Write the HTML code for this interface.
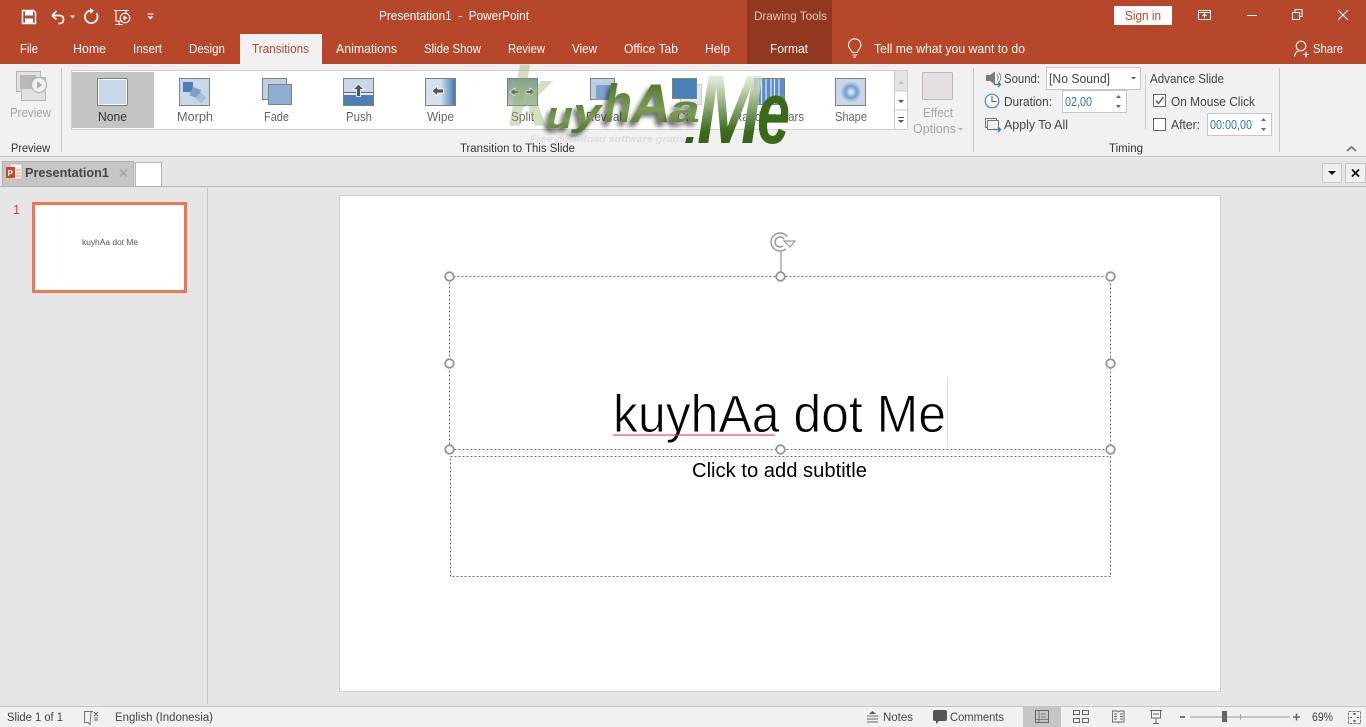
<!DOCTYPE html>
<html><head><meta charset="utf-8"><title>PowerPoint</title>
<style>
html,body{margin:0;padding:0;width:1366px;height:727px;overflow:hidden;background:#e6e6e6}
svg{display:block}
text{font-family:"Liberation Sans",sans-serif;font-size:12.5px;fill:#444}
.w{fill:#fff}.g{fill:#a6a6a6}.d{fill:#333}.b{fill:#2f73b7}
.ic{fill:none;stroke:#fff;stroke-width:1.5}
.wm{font-family:"Liberation Sans",sans-serif;font-style:italic;font-weight:bold}
</style></head><body>
<svg width="1366" height="727" viewBox="0 0 1366 727" xmlns="http://www.w3.org/2000/svg">
<defs>
<linearGradient id="wipe" x1="0" x2="1"><stop offset=".5" stop-color="#d5e1ee"/><stop offset="1" stop-color="#3f74ad"/></linearGradient>
<linearGradient id="spl" x1="0" x2="0" y1="0" y2="1"><stop offset="0" stop-color="#7f9f95"/><stop offset="1" stop-color="#b9cbb5"/></linearGradient>
<radialGradient id="sh"><stop offset="0" stop-color="#f3f7fb"/><stop offset=".55" stop-color="#6f9fd0"/><stop offset="1" stop-color="#c9d9e9"/></radialGradient>
<linearGradient id="gr" x1="0" x2="0" y1="0" y2="1"><stop offset="0" stop-color="#3f6f1c"/><stop offset=".6" stop-color="#7b9c52"/><stop offset="1" stop-color="#496f25"/></linearGradient>
<linearGradient id="grm" x1="0" x2="0" y1="0" y2="1"><stop offset="0" stop-color="#fff" stop-opacity=".3"/><stop offset=".35" stop-color="#b5c9a2"/><stop offset=".7" stop-color="#3c6a1c"/><stop offset="1" stop-color="#2c5a12"/></linearGradient>
<filter id="shd" x="-30%" y="-20%" width="160%" height="150%"><feDropShadow dx="-3" dy="4" stdDeviation="2.5" flood-color="#000" flood-opacity=".6"/></filter>
<pattern id="sq" width="4" height="2" patternUnits="userSpaceOnUse" x="613" y="434"><path d="M0 .5l1 1 1-1 1 1 1-1" fill="none" stroke="#ea3a3a" stroke-width=".8"/></pattern>
</defs>

<!-- title bar -->
<rect width="1366" height="64" fill="#b7472a"/>
<rect x="747" width="85" height="64" fill="#923720"/>
<rect x="240" y="34" width="82" height="30" fill="#f1f1f1"/>

<!-- QAT -->
<path d="M22.500 10.500h11l2 2v11h-13z" class="ic"/>
<rect x="25" y="11" width="8" height="4.500" fill="#fff"/><rect x="25" y="18.500" width="8" height="5" fill="#fff"/>
<path d="M52 15.500l4.500-4.500M52 15.500l4.500 4M52.500 15.500h7q4 0 4 4t-4 4h-1" fill="none" stroke="#fff" stroke-width="1.700"/>
<path d="M70 15.500h5l-2.500 3z" fill="#fff"/>
<path d="M91 10.500a6.300 6.300 0 1 0 5.500 2.800" fill="none" stroke="#fff" stroke-width="1.800"/><path d="M90 8l4 2.500-3.500 3.500z" fill="#fff"/>
<path d="M114 10.500h15M116 11v10h6M126 11v3M119 21v3M115.500 24.500h7" fill="none" stroke="#fff" stroke-width="1.100"/>
<circle cx="125" cy="18" r="4.800" fill="none" stroke="#fff" stroke-width="1.100"/><path d="M123.500 15.500l4 2.500-4 2.500z" fill="#fff"/>
<path d="M147.500 14h6" stroke="#fff"/><path d="M147.500 16.500h6l-3 3z" fill="#fff"/>

<text x="379" y="20" class="w" textLength="150" lengthAdjust="spacingAndGlyphs" xml:space="preserve">Presentation1  -  PowerPoint</text>
<text x="754" y="20" style="fill:#eec3b6;font-size:11.5px" textLength="73" lengthAdjust="spacingAndGlyphs">Drawing Tools</text>
<rect x="1114" y="6" width="58" height="19" fill="#fff"/>
<text x="1125" y="20" style="fill:#b7472a;font-size:13px" textLength="36" lengthAdjust="spacingAndGlyphs">Sign in</text>

<!-- window controls -->
<rect x="1198.500" y="10.500" width="12" height="9" fill="none" stroke="#fff"/><path d="M1198 12.500h13M1204.500 18v-4M1202.500 16l2-2 2 2" fill="none" stroke="#fff"/>
<path d="M1247 15.500h10" stroke="#fff" stroke-width="1"/>
<rect x="1292.500" y="12.500" width="7" height="7" fill="none" stroke="#fff"/><path d="M1295 12v-2.500h7v7h-2.500" fill="none" stroke="#fff"/>
<path d="M1338 10l10 10M1348 10l-10 10" stroke="#fff" stroke-width="1"/>

<!-- tabs -->
<text x="20" y="53" class="w" textLength="18" lengthAdjust="spacingAndGlyphs">File</text>
<text x="73" y="53" class="w" textLength="33" lengthAdjust="spacingAndGlyphs">Home</text>
<text x="133" y="53" class="w" textLength="29" lengthAdjust="spacingAndGlyphs">Insert</text>
<text x="189" y="53" class="w" textLength="36" lengthAdjust="spacingAndGlyphs">Design</text>
<text x="252" y="53" style="fill:#b7472a" textLength="57" lengthAdjust="spacingAndGlyphs">Transitions</text>
<text x="336" y="53" class="w" textLength="61" lengthAdjust="spacingAndGlyphs">Animations</text>
<text x="424" y="53" class="w" textLength="57" lengthAdjust="spacingAndGlyphs">Slide Show</text>
<text x="508" y="53" class="w" textLength="37" lengthAdjust="spacingAndGlyphs">Review</text>
<text x="572" y="53" class="w" textLength="25" lengthAdjust="spacingAndGlyphs">View</text>
<text x="624" y="53" class="w" textLength="54" lengthAdjust="spacingAndGlyphs">Office Tab</text>
<text x="705" y="53" class="w" textLength="25" lengthAdjust="spacingAndGlyphs">Help</text>
<text x="770" y="53" class="w" textLength="38" lengthAdjust="spacingAndGlyphs">Format</text>
<path d="M852 52.500c0-2.500-3.500-3.500-3.500-7.500a6.200 6.200 0 0 1 12.400 0c0 4-3.500 5-3.500 7.500zM852.500 55h4.500M853.500 57h2.500" fill="none" stroke="#fff" stroke-width="1.100"/>
<text x="874" y="53" class="w" textLength="151" lengthAdjust="spacingAndGlyphs">Tell me what you want to do</text>
<circle cx="1301" cy="46" r="4.800" fill="none" stroke="#fff" stroke-width="1.100"/>
<path d="M1294.500 56.500c.5-4 3-5.500 5-6M1303 54.500h6M1306 51.500v6" fill="none" stroke="#fff" stroke-width="1.100"/>
<text x="1313" y="53" class="w" textLength="30" lengthAdjust="spacingAndGlyphs">Share</text>

<!-- ribbon -->
<rect y="64" width="1366" height="92" fill="#f1f1f1"/>
<rect y="156" width="1366" height="1" fill="#c6c6c6"/>
<rect x="61" y="68" width="1" height="84" fill="#c6c6c6"/>
<rect x="973" y="68" width="1" height="84" fill="#c6c6c6"/>
<rect x="1279" y="68" width="1" height="84" fill="#c6c6c6"/>
<rect x="1145" y="74" width="1" height="55" fill="#d0d0d0"/>

<!-- preview group -->
<rect x="16.500" y="71.500" width="24" height="20" fill="#e4dfe3" stroke="#b4b4b4"/>
<rect x="21.500" y="77.500" width="24" height="23" fill="#e4dfe3" stroke="#b4b4b4"/>
<rect x="20" y="75" width="16" height="14" fill="#b8b8b8"/>
<circle cx="39" cy="85" r="7.500" fill="#f1f1f1" stroke="#b4b4b4" stroke-width="1.200"/><path d="M37 81l5 4-5 4z" fill="#b0b0b0"/>
<text x="10" y="117" class="g" textLength="41" lengthAdjust="spacingAndGlyphs">Preview</text>
<text x="11" y="152" class="d" textLength="39" lengthAdjust="spacingAndGlyphs" style="font-size:11.500px">Preview</text>

<!-- gallery -->
<rect x="71.500" y="70.500" width="836" height="59" fill="#fff" stroke="#d0d0d0"/>
<rect x="72" y="72" width="82" height="56" fill="#c4c4c4"/>
<rect x="894" y="71" width="13" height="20" fill="#e4e4e4"/>
<path d="M894.500 71v58M895 91h13M895 110h13" stroke="#c8c8c8" fill="none"/>
<path d="M898 84l3-3 3 3z" fill="#c0c0c0"/>
<path d="M898 100h6l-3 3z" fill="#555"/>
<path d="M898 117.500h6" stroke="#555"/><path d="M898 120h6l-3 3z" fill="#555"/>

<!-- None -->
<rect x="97.500" y="78.500" width="30" height="27" rx="1" fill="#c9d8e8" stroke="#7f7f7f"/><rect x="98.500" y="79.500" width="28" height="25" fill="none" stroke="#fff"/>
<!-- Morph -->
<rect x="179.500" y="78.500" width="30" height="27" fill="#c9d8e8" stroke="#7f7f7f"/>
<rect x="183" y="82" width="10" height="10" fill="#4a7fb8"/>
<rect x="191" y="88" width="9" height="9" fill="#79a1cc" transform="rotate(20 195 92)"/>
<rect x="197" y="94" width="8" height="8" fill="#a7c1dd" transform="rotate(40 201 98)"/>
<!-- Fade -->
<rect x="262.500" y="78.500" width="24" height="21" fill="#bfd0e3" stroke="#7f7f7f"/>
<rect x="268.500" y="84.500" width="23" height="20" fill="#8eaed1" stroke="#7f7f7f"/>
<!-- Push -->
<rect x="343.500" y="78.500" width="30" height="27" fill="#c9d8e8" stroke="#7f7f7f"/>
<rect x="344" y="95" width="29" height="10" fill="#4a7fb8"/><path d="M344 92.500h29" stroke="#666"/><path d="M344 94h29" stroke="#fff"/>
<path d="M358.500 84l5.500 5.500h-3.500v7h-4v-7h-3.500z" fill="#555" stroke="#fff" stroke-width=".8"/>
<!-- Wipe -->
<rect x="425.500" y="78.500" width="30" height="27" fill="url(#wipe)" stroke="#7f7f7f"/>
<path d="M432 91l5.500-5v3h6v4h-6v3z" fill="#555" stroke="#fff" stroke-width=".8"/>
<!-- Split -->
<rect x="507.500" y="78.500" width="30" height="27" fill="url(#spl)" stroke="#7f7f7f"/>
<path d="M510 92l5-4v2.500h4v3h-4v2.500zM535 92l-5-4v2.500h-4v3h4v2.500z" fill="#6a6a50" stroke="#fff" stroke-width=".6"/>
<!-- Reveal -->
<rect x="590.500" y="78.500" width="24" height="21" fill="#bfd0e3" stroke="#7f7f7f"/>
<rect x="596" y="85" width="19" height="15" fill="#7ea4cc"/>
<!-- Cut -->
<rect x="680.500" y="84.500" width="21" height="20" fill="#dfe8f2" stroke="#c4cdd6"/>
<rect x="672.500" y="78.500" width="24" height="20" fill="#4a7fb8" stroke="#7f7f7f"/>
<!-- Random bars -->
<rect x="754.500" y="78.500" width="30" height="26" fill="#5b8ec4" stroke="#7f7f7f"/>
<path d="M758 79v25M761.500 79v25M766 79v25M771 79v25M774.500 79v25M779 79v25" stroke="#dce7f2" stroke-width="1.200"/>
<!-- Shape -->
<rect x="835.500" y="78.500" width="30" height="27" fill="#c9d8e8" stroke="#7f7f7f"/>
<circle cx="851" cy="92" r="10.500" fill="url(#sh)"/>

<g>
<text x="98" y="121" class="d" textLength="29" lengthAdjust="spacingAndGlyphs">None</text>
<text x="177" y="121" textLength="36" lengthAdjust="spacingAndGlyphs" style="fill:#666">Morph</text>
<text x="264" y="121" textLength="25" lengthAdjust="spacingAndGlyphs" style="fill:#666">Fade</text>
<text x="346" y="121" textLength="26" lengthAdjust="spacingAndGlyphs" style="fill:#666">Push</text>
<text x="427" y="121" textLength="27" lengthAdjust="spacingAndGlyphs" style="fill:#666">Wipe</text>
<text x="511" y="121" textLength="23" lengthAdjust="spacingAndGlyphs" style="fill:#666">Split</text>
<text x="586" y="121" textLength="36" lengthAdjust="spacingAndGlyphs" style="fill:#666">Reveal</text>
<text x="677" y="121" textLength="19" lengthAdjust="spacingAndGlyphs" style="fill:#666">Cut</text>
<text x="734" y="121" textLength="70" lengthAdjust="spacingAndGlyphs" style="fill:#666">Random Bars</text>
<text x="835" y="121" textLength="32" lengthAdjust="spacingAndGlyphs" style="fill:#666">Shape</text>
</g>
<text x="460" y="152" class="d" textLength="115" lengthAdjust="spacingAndGlyphs" style="font-size:11.500px">Transition to This Slide</text>

<!-- effect options -->
<rect x="922.500" y="72.500" width="30" height="27" rx="1" fill="#e4dfe3" stroke="#b9b9b9"/>
<text x="923" y="117" class="g" textLength="30" lengthAdjust="spacingAndGlyphs">Effect</text>
<text x="913" y="133" class="g" textLength="43" lengthAdjust="spacingAndGlyphs">Options</text>
<path d="M958 128h5l-2.500 2.500z" fill="#b0b0b0"/>

<!-- timing -->
<path d="M986 75h4l5-3.500v13l-5-3.500h-4z" fill="#7b7b7b"/>
<path d="M997 74.500q2 3 0 6M999 72.500q3.500 5 0 10" fill="none" stroke="#888"/>
<path d="M994 84.500h6M998 82l2.500 2.500L998 87" fill="none" stroke="#3f74ad" stroke-width="1.300"/>
<text x="1004" y="83" textLength="36" lengthAdjust="spacingAndGlyphs">Sound:</text>
<rect x="1046.500" y="67.500" width="94" height="22" fill="#fff" stroke="#c6c6c6"/>
<text x="1049" y="83" textLength="61" lengthAdjust="spacingAndGlyphs">[No Sound]</text>
<path d="M1131 77h5l-2.500 2.500z" fill="#555"/>

<circle cx="992" cy="101" r="6.800" fill="#fff" fill-opacity=".4" stroke="#4a86c4" stroke-width="1.200"/><path d="M992 96v5.500h4.500" fill="none" stroke="#555"/>
<text x="1004" y="106" textLength="48" lengthAdjust="spacingAndGlyphs">Duration:</text>
<rect x="1062.500" y="90.500" width="64" height="22" fill="#fff" stroke="#c6c6c6"/>
<text x="1065" y="106" class="b" textLength="27" lengthAdjust="spacingAndGlyphs">02,00</text>
<path d="M1116 98l2.500-3 2.500 3zM1116 105l2.500 3 2.500-3z" fill="#666"/>

<rect x="985.500" y="118.500" width="11" height="9" fill="none" stroke="#777"/>
<rect x="987.500" y="120.500" width="11" height="9" fill="#f1f1f1" stroke="#777"/>
<path d="M994 129.500h6M998 127l2.500 2.500L998 132" fill="none" stroke="#3f74ad" stroke-width="1.300"/>
<text x="1004" y="129" textLength="64" lengthAdjust="spacingAndGlyphs">Apply To All</text>

<text x="1150" y="83" textLength="74" lengthAdjust="spacingAndGlyphs">Advance Slide</text>
<rect x="1153.500" y="94.500" width="12" height="12" fill="#fff" stroke="#666"/>
<path d="M1156 100.500l2.500 3 5-6.500" fill="none" stroke="#666" stroke-width="1.500"/>
<text x="1171" y="106" textLength="84" lengthAdjust="spacingAndGlyphs">On Mouse Click</text>
<rect x="1153.500" y="118.500" width="12" height="12" fill="#fff" stroke="#666"/>
<text x="1171" y="129" textLength="29" lengthAdjust="spacingAndGlyphs">After:</text>
<rect x="1207.500" y="113.500" width="64" height="22" fill="#fff" stroke="#c6c6c6"/>
<text x="1210" y="129" class="b" textLength="42" lengthAdjust="spacingAndGlyphs">00:00,00</text>
<path d="M1261 121l2.500-3 2.500 3zM1261 128l2.500 3 2.500-3z" fill="#666"/>
<text x="1109" y="152" class="d" textLength="34" lengthAdjust="spacingAndGlyphs" style="font-size:11.500px">Timing</text>
<path d="M1347 151l4.500-4 4.500 4" fill="none" stroke="#777" stroke-width="1.800"/>

<!-- watermark -->
<text x="508" y="126" textLength="42" lengthAdjust="spacingAndGlyphs" class="wm" style="font-size:84px;fill:#8fae6a;fill-opacity:.4">k</text>
<text x="546" y="128" filter="url(#shd)" textLength="27" lengthAdjust="spacingAndGlyphs" class="wm" style="font-size:38px;fill:url(#gr)">u</text>
<text x="573" y="125" filter="url(#shd)" textLength="28" lengthAdjust="spacingAndGlyphs" class="wm" style="font-size:38px;fill:url(#gr)">y</text>
<text x="604" y="122" filter="url(#shd)" textLength="28" lengthAdjust="spacingAndGlyphs" class="wm" style="font-size:54px;fill:url(#gr)">h</text>
<text x="631" y="122" filter="url(#shd)" textLength="40" lengthAdjust="spacingAndGlyphs" class="wm" style="font-size:55px;fill:url(#gr)">A</text>
<text x="669" y="122" filter="url(#shd)" textLength="31" lengthAdjust="spacingAndGlyphs" class="wm" style="font-size:38px;fill:url(#gr)">a</text>
<text x="684" y="143" textLength="14" lengthAdjust="spacingAndGlyphs" class="wm" style="font-size:40px;fill:#2f5a12">.</text>
<text x="697" y="143" textLength="64" lengthAdjust="spacingAndGlyphs" class="wm" style="font-size:97px;fill:url(#grm)">M</text>
<text x="757" y="143" textLength="33" lengthAdjust="spacingAndGlyphs" class="wm" style="font-size:88px;fill:#3a6a18">e</text>
<text x="530" y="142" textLength="155" lengthAdjust="spacingAndGlyphs" class="wm" style="font-size:9px;fill:#dcdcdc">Free download software gratis</text>

<!-- doc tab bar -->
<rect x="2.500" y="161.500" width="131" height="25" fill="#c6c6c6" stroke="#b0b0b0"/>
<rect x="135.500" y="162.500" width="26" height="24" fill="#fff" stroke="#b4b4b4"/>
<rect x="10" y="164" width="12" height="15" fill="#f7f1ee" stroke="#b8a9a2" stroke-width=".7"/>
<rect x="6" y="167" width="9" height="11" fill="#d24726"/>
<text x="7.500" y="176" class="w" style="font-size:8px;font-weight:bold">P</text>
<path d="M16 170h5M16 173h5M16 176h5" stroke="#e09a80"/>
<text x="25" y="177" textLength="84" lengthAdjust="spacingAndGlyphs" style="font-weight:bold;fill:#444">Presentation1</text>
<path d="M120 169.500l7 7M127 169.500l-7 7" stroke="#a8a8a8" stroke-width="1.800"/>
<rect x="1322.500" y="163.500" width="19" height="19" fill="#efefef" stroke="#c6c6c6"/>
<path d="M1328 171h8l-4 4z" fill="#111"/>
<rect x="1345.500" y="163.500" width="20" height="19" fill="#efefef" stroke="#c6c6c6"/>
<path d="M1352 169.500l7 7M1359 169.500l-7 7" stroke="#111" stroke-width="1.800"/>
<rect y="186" width="1366" height="1" fill="#b4b4b4"/>

<!-- panes -->
<rect x="207" y="188" width="1" height="516" fill="#c6c6c6"/>
<text x="13" y="214" textLength="7" lengthAdjust="spacingAndGlyphs" style="fill:#d24726;font-size:13px">1</text>
<rect x="33.500" y="203.500" width="152" height="88" fill="#fff" stroke="#f47351" stroke-width="3"/>
<text x="82" y="245" textLength="56" lengthAdjust="spacingAndGlyphs" style="font-size:8px;fill:#555">kuyhAa dot Me</text>

<!-- slide -->
<rect x="339.500" y="195.500" width="881" height="496" fill="#fff" stroke="#d0d0d0"/>
<rect x="449.500" y="276.500" width="661" height="173" fill="none" stroke="#707070" stroke-dasharray="2 2"/>
<rect x="450.500" y="456.500" width="660" height="120" fill="none" stroke="#707070" stroke-dasharray="2 2"/>
<path d="M781 252v20" stroke="#959595" stroke-width="1.200"/>
<path d="M787.400 236.800A9 9 0 1 0 785.800 248.900M784.100 239.100A5 5 0 1 0 783.200 245.800" fill="none" stroke="#999" stroke-width="1.500"/>
<path d="M784 241h11l-5 6z" fill="#fff" stroke="#999" stroke-width="1.200"/>
<g fill="#fff" stroke="#959595" stroke-width="1.800">
<circle cx="449.500" cy="276.500" r="4.300"/><circle cx="780.500" cy="276.500" r="4.300"/><circle cx="1110.500" cy="276.500" r="4.300"/>
<circle cx="449.500" cy="363.500" r="4.300"/><circle cx="1110.500" cy="363.500" r="4.300"/>
<circle cx="449.500" cy="449.500" r="4.300"/><circle cx="780.500" cy="449.500" r="4.300"/><circle cx="1110.500" cy="449.500" r="4.300"/>
</g>
<text x="613" y="432" textLength="333" lengthAdjust="spacingAndGlyphs" stroke="#fff" stroke-width=".9" style="font-size:53px;fill:#000">kuyhAa dot Me</text>
<rect x="613" y="434" width="162" height="2" fill="url(#sq)"/>
<rect x="947" y="378" width="1" height="69" fill="#ddd"/>
<text x="692" y="477" textLength="175" lengthAdjust="spacingAndGlyphs" style="font-size:20px;fill:#000">Click to add subtitle</text>

<!-- status bar -->
<rect y="706" width="1366" height="1" fill="#c6c6c6"/>
<rect y="707" width="1366" height="20" fill="#f1f1f1"/>
<text x="7" y="721" textLength="56" lengthAdjust="spacingAndGlyphs" style="font-size:11.500px">Slide 1 of 1</text>
<path d="M91 711.500h-6.500v11h3.500l2 2zM91 711.500h2" fill="none" stroke="#777"/>
<path d="M94 712l4 4M98 712l-4 4M94 718h4M94 720h4" stroke="#666"/>
<text x="115" y="721" textLength="98" lengthAdjust="spacingAndGlyphs" style="font-size:11.500px">English (Indonesia)</text>

<path d="M869 714l3.500-3 3.500 3z" fill="#555"/><path d="M867 716h11M867 719h11M867 722h11" stroke="#666"/>
<text x="883" y="721" textLength="30" lengthAdjust="spacingAndGlyphs" style="font-size:11.500px">Notes</text>
<path d="M935 710h10a2 2 0 0 1 2 2v7a2 2 0 0 1-2 2h-6l-3 3v-3h-1a2 2 0 0 1-2-2v-7a2 2 0 0 1 2-2z" fill="#555"/>
<text x="950" y="721" textLength="54" lengthAdjust="spacingAndGlyphs" style="font-size:11.500px">Comments</text>
<rect x="1023" y="707" width="38" height="20" fill="#c6c6c6"/>
<rect x="1035.500" y="710.500" width="13" height="12" fill="none" stroke="#666"/><path d="M1039 711v11M1041 714h5M1041 717h5M1036 719.500h12" fill="none" stroke="#666" stroke-width=".8"/>
<g fill="none" stroke="#666"><rect x="1073.500" y="710.500" width="6" height="4"/><rect x="1082.500" y="710.500" width="6" height="4"/><rect x="1073.500" y="718.500" width="6" height="4"/><rect x="1082.500" y="718.500" width="6" height="4"/></g>
<path d="M1112.500 711h5l1 1 1-1h4.500v11h-5l-.5 1-.5-1h-5.500zM1114 714h3M1114 716.500h3M1114 719h3M1120 714h3M1120 716.500h3M1120 719h3" fill="none" stroke="#666" stroke-width=".9"/>
<path d="M1150 710.500h12M1151.500 711v7h9v-7M1153 714h6M1156 718v5M1153 723.500h6" fill="none" stroke="#666"/>
<path d="M1180 717h5" stroke="#666" stroke-width="1.800"/>
<rect x="1190" y="716.500" width="100" height="1" fill="#9a9a9a"/>
<rect x="1240" y="714" width="1" height="6" fill="#aaa"/>
<rect x="1222" y="711" width="5" height="11" fill="#666"/>
<path d="M1293 717h7M1296.500 713.500v7" stroke="#666" stroke-width="1.500"/>
<text x="1312" y="721" textLength="21" lengthAdjust="spacingAndGlyphs" style="font-size:11.500px">69%</text>
<rect x="1348.500" y="711.500" width="12" height="12" fill="none" stroke="#777" stroke-dasharray="3 1"/>
<path d="M1354.500 713v2M1353 714h3M1354.500 720v2M1353 721h3M1350 717.500h2M1357 717.500h2" stroke="#555" stroke-width=".9"/>
</svg>
</body></html>
